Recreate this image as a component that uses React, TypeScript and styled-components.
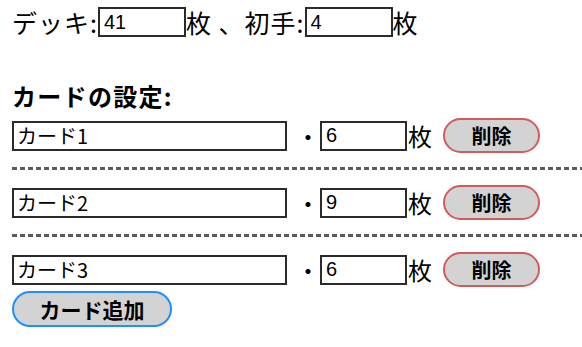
import React, { useState } from 'react';
import styled, { createGlobalStyle } from 'styled-components';

interface CardItem {
  id: number;
  name: string;
  count: string;
}

const GlobalStyle = createGlobalStyle`
  body {
    margin: 0;
    background: #fff;
    color: #000;
    font-family: "Noto Sans CJK JP", "Liberation Sans", sans-serif;
  }
`;

const Page = styled.div`
  padding: 7px 12px;
`;

const TopRow = styled.div`
  display: flex;
  align-items: center;
  height: 30px;
  font-size: 25px;
  line-height: 30px;
  letter-spacing: 1px;
`;

const Label = styled.span`
  white-space: pre;
`;

const NumInput = styled.input<{ $width?: number }>`
  box-sizing: border-box;
  width: ${(p) => p.$width ?? 87}px;
  height: 30px;
  margin: 0;
  padding: 0 4px;
  border: 2px solid #2b2b2b;
  font-family: "Liberation Sans", "Noto Sans CJK JP", sans-serif;
  font-size: 20px;
  letter-spacing: 0;
  color: #000;
  background: #fff;
  outline: none;
`;

const Heading = styled.h3`
  margin: 44px 0 7px;
  font-size: 24px;
  line-height: 30px;
  letter-spacing: 1.3px;
  font-weight: bold;
`;

const CardRow = styled.div`
  display: flex;
  align-items: center;
  height: 35px;
  font-size: 24px;
`;

const NameInput = styled.input`
  box-sizing: border-box;
  width: 275px;
  height: 30px;
  margin: 0;
  padding: 0 3px;
  border: 2px solid #2b2b2b;
  font-family: "Noto Sans CJK JP", "Liberation Sans", sans-serif;
  font-size: 20px;
  color: #000;
  background: #fff;
  outline: none;
`;

const Dot = styled.span`
  width: 33px;
  text-align: right;
`;

const Unit = styled.span`
  margin-left: 1px;
`;

const PillButton = styled.button<{ $tone: 'red' | 'blue' }>`
  box-sizing: border-box;
  height: ${(p) => (p.$tone === 'red' ? 35 : 36)}px;
  width: ${(p) => (p.$tone === 'red' ? 97 : 160)}px;
  margin-left: ${(p) => (p.$tone === 'red' ? 11 : 0)}px;
  padding: 0;
  border: 2.5px solid ${(p) => (p.$tone === 'red' ? '#d45b5b' : '#1e8fff')};
  border-radius: 18px;
  background: #d3d3d3;
  color: #000;
  font-family: "Noto Sans CJK JP", sans-serif;
  font-weight: bold;
  font-size: ${(p) => (p.$tone === 'red' ? 20 : 21)}px;
  cursor: pointer;
`;

const Separator = styled.div`
  height: 3px;
  margin: 14px -12px 15px 0;
  background: repeating-linear-gradient(to right, #5a5a5a 0 5px, transparent 5px 8px);
`;

const AddRow = styled.div`
  margin-top: 4px;
`;

const App: React.FC = () => {
  const [deck, setDeck] = useState('41');
  const [hand, setHand] = useState('4');
  const [cards, setCards] = useState<CardItem[]>([
    { id: 1, name: 'カード1', count: '6' },
    { id: 2, name: 'カード2', count: '9' },
    { id: 3, name: 'カード3', count: '6' },
  ]);

  const updateCard = (id: number, key: 'name' | 'count', value: string) => {
    setCards((prev) => prev.map((c) => (c.id === id ? { ...c, [key]: value } : c)));
  };

  const handleDelete = (id: number) => {
    setCards((prev) => prev.filter((c) => c.id !== id));
  };

  const handleAdd = () => {
    const nextId = cards.length ? Math.max(...cards.map((c) => c.id)) + 1 : 1;
    setCards([...cards, { id: nextId, name: `カード${nextId}`, count: '1' }]);
  };

  return (
    <Page>
      <GlobalStyle />
      <TopRow>
        <Label>デッキ:</Label>
        <NumInput $width={88} value={deck} onChange={(e) => setDeck(e.target.value)} />
        <Label>枚 、初手:</Label>
        <NumInput $width={88} value={hand} onChange={(e) => setHand(e.target.value)} />
        <Label>枚</Label>
      </TopRow>

      <Heading>カードの設定:</Heading>

      {cards.map((card, index) => (
        <React.Fragment key={card.id}>
          {index > 0 && <Separator />}
          <CardRow>
            <NameInput value={card.name} onChange={(e) => updateCard(card.id, 'name', e.target.value)} />
            <Dot>・</Dot>
            <NumInput value={card.count} onChange={(e) => updateCard(card.id, 'count', e.target.value)} />
            <Unit>枚</Unit>
            <PillButton $tone="red" onClick={() => handleDelete(card.id)}>
              削除
            </PillButton>
          </CardRow>
        </React.Fragment>
      ))}

      <AddRow>
        <PillButton $tone="blue" onClick={handleAdd}>
          カード追加
        </PillButton>
      </AddRow>
    </Page>
  );
};

export default App;
